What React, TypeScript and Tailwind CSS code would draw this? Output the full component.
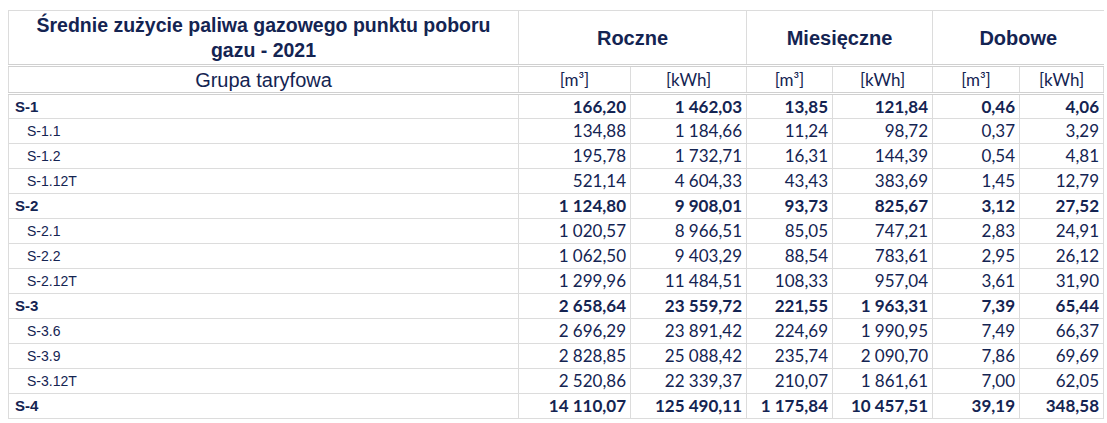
const rows: [string, boolean, string[]][] = [
  ["S-1", true, ["166,20", "1 462,03", "13,85", "121,84", "0,46", "4,06"]],
  ["S-1.1", false, ["134,88", "1 184,66", "11,24", "98,72", "0,37", "3,29"]],
  ["S-1.2", false, ["195,78", "1 732,71", "16,31", "144,39", "0,54", "4,81"]],
  ["S-1.12T", false, ["521,14", "4 604,33", "43,43", "383,69", "1,45", "12,79"]],
  ["S-2", true, ["1 124,80", "9 908,01", "93,73", "825,67", "3,12", "27,52"]],
  ["S-2.1", false, ["1 020,57", "8 966,51", "85,05", "747,21", "2,83", "24,91"]],
  ["S-2.2", false, ["1 062,50", "9 403,29", "88,54", "783,61", "2,95", "26,12"]],
  ["S-2.12T", false, ["1 299,96", "11 484,51", "108,33", "957,04", "3,61", "31,90"]],
  ["S-3", true, ["2 658,64", "23 559,72", "221,55", "1 963,31", "7,39", "65,44"]],
  ["S-3.6", false, ["2 696,29", "23 891,42", "224,69", "1 990,95", "7,49", "66,37"]],
  ["S-3.9", false, ["2 828,85", "25 088,42", "235,74", "2 090,70", "7,86", "69,69"]],
  ["S-3.12T", false, ["2 520,86", "22 339,37", "210,07", "1 861,61", "7,00", "62,05"]],
  ["S-4", true, ["14 110,07", "125 490,11", "1 175,84", "10 457,51", "39,19", "348,58"]],
];

const units = ["[m³]", "[kWh]", "[m³]", "[kWh]", "[m³]", "[kWh]"];
const widths = ["w-[510px]", "w-[112px]", "w-[116px]", "w-[86px]", "w-[100px]", "w-[87px]", "w-[84px]"];

export default function App() {
  return (
    <div className="w-[1107px] h-[423px] bg-white pt-[10px] pl-[8px] text-[#142452]">
      <table className="border-collapse table-fixed w-[1096px]">
        <colgroup>
          {widths.map((w, i) => (
            <col key={i} className={w} />
          ))}
        </colgroup>
        <thead>
          <tr className="h-[55px] border-t border-[#dcdcdc] border-b-[3px] border-b-[#d0d0d0] border-double">
            <th className="border-l border-r border-[#dcdcdc] font-['Liberation_Sans',Arial,sans-serif] font-bold text-[19.5px] leading-[25px] px-[14px]">
              Średnie zużycie paliwa gazowego punktu poboru gazu - 2021
            </th>
            <th colSpan={2} className="border-r border-[#dcdcdc] font-['Liberation_Sans',Arial,sans-serif] font-bold text-[20px]">
              Roczne
            </th>
            <th colSpan={2} className="border-r border-[#dcdcdc] font-['Liberation_Sans',Arial,sans-serif] font-bold text-[20px]">
              Miesięczne
            </th>
            <th colSpan={2} className="font-['Liberation_Sans',Arial,sans-serif] font-bold text-[20px]">
              Dobowe
            </th>
          </tr>
          <tr className="h-[28px] border-b-[3px] border-double border-[#d0d0d0]">
            <th className="border-l border-r border-[#dcdcdc] font-['Liberation_Sans',Arial,sans-serif] font-normal text-[20px] leading-[22px]">
              Grupa taryfowa
            </th>
            {units.map((u, i) => (
              <th
                key={i}
                className="border-r border-[#dcdcdc] font-['Lato','Open_Sans',sans-serif] font-normal text-[17px] leading-[20px]"
              >
                {u}
              </th>
            ))}
          </tr>
        </thead>
        <tbody>
          {rows.map(([label, bold, vals]) => (
            <tr key={label} className="h-[25px] border-b border-[#dcdcdc]">
              <td
                className={
                  bold
                    ? "border-l border-r border-[#dcdcdc] pl-[6px] font-['Liberation_Sans',Arial,sans-serif] font-bold text-[15px] leading-[20px]"
                    : "border-l border-r border-[#dcdcdc] pl-[18px] font-['Liberation_Sans',Arial,sans-serif] text-[14px] leading-[20px]"
                }
              >
                {label}
              </td>
              {vals.map((v, i) => (
                <td
                  key={i}
                  className={
                    (bold ? "font-bold " : "") +
                    "border-r border-[#dcdcdc] text-right pr-[4px] font-['Lato','Open_Sans',sans-serif] text-[17px] leading-[20px] whitespace-nowrap"
                  }
                >
                  {v}
                </td>
              ))}
            </tr>
          ))}
        </tbody>
      </table>
    </div>
  );
}
